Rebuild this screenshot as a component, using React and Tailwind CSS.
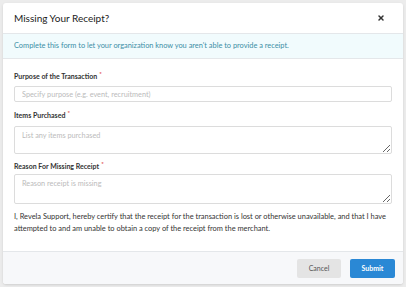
import { X } from 'lucide-react';

function Label({ children }) {
  return (
    <div className="h-[10px] flex items-center text-[7px] font-bold text-[#333] leading-[10px]">
      {children}
      <span className="text-[#e0433f] ml-[2px] self-start text-[6px] leading-[6px]">*</span>
    </div>
  );
}

export default function App() {
  return (
    <div
      className="w-[406px] h-[287px] bg-[#ececec] p-[3px]"
      style={{ fontFamily: 'Lato, "Open Sans", sans-serif' }}
    >
      <div className="w-[400px] h-[281px] bg-white rounded-[3px] shadow-sm flex flex-col overflow-hidden">
        <div className="h-[30px] flex items-center justify-between px-[11px] shrink-0">
          <h2 className="text-[10px] leading-[12px] text-[#222]">Missing Your Receipt?</h2>
          <X className="w-[8px] h-[8px] text-[#333] mr-[7px]" strokeWidth={4.5} />
        </div>
        <div className="h-[26px] bg-[#f1fbfd] border-y border-[#e4e7ea] flex items-center px-[11px] shrink-0">
          <p className="text-[7.4px] leading-[10px] text-[#3c8fa6]">
            Complete this form to let your organization know you aren't able to provide a receipt.
          </p>
        </div>
        <div className="flex-1 flex flex-col px-[11px] pt-[12px]">
          <Label>Purpose of the Transaction</Label>
          <input
            className="mt-[5px] w-full h-[16px] border border-[#dcdcdc] rounded-[2px] px-[7px] text-[7.3px] placeholder:text-[#bbb] outline-none"
            placeholder="Specify purpose (e.g. event, recruitment)"
          />
          <div className="mt-[8px]">
            <Label>Items Purchased</Label>
          </div>
          <textarea
            className="mt-[6px] w-full h-[28px] block border border-[#dcdcdc] rounded-[2px] px-[7px] py-[4px] text-[7.3px] leading-[10px] placeholder:text-[#bbb] outline-none"
            placeholder="List any items purchased"
          />
          <div className="mt-[7px]">
            <Label>Reason For Missing Receipt</Label>
          </div>
          <textarea
            className="mt-[3px] w-full h-[30px] block border border-[#dcdcdc] rounded-[2px] px-[7px] py-[4px] text-[7.3px] leading-[10px] placeholder:text-[#bbb] outline-none"
            placeholder="Reason receipt is missing"
          />
          <p className="mt-[7px] text-[7.45px] leading-[12px] text-[#333]">
            I, Revela Support, hereby certify that the receipt for the transaction is lost or otherwise unavailable, and that I have attempted to and am unable to obtain a copy of the receipt from the merchant.
          </p>
        </div>
        <div className="h-[33px] bg-[#f7f8fa] border-t border-[#e4e7ea] flex items-center justify-end gap-[9px] px-[8px] shrink-0">
          <button className="w-[44px] h-[19px] rounded-[2px] bg-[#e4e4e4] text-[7px] text-[#555]">Cancel</button>
          <button className="w-[45px] h-[19px] rounded-[2px] bg-[#2a88d5] text-[7px] font-bold text-white">Submit</button>
        </div>
      </div>
    </div>
  );
}
